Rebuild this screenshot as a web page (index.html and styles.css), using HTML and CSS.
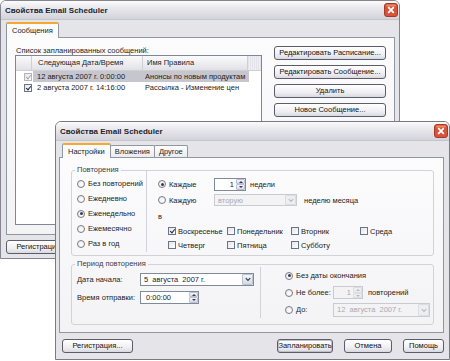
FILE: index.html
```html
<!DOCTYPE html>
<html lang="ru">
<head>
    <meta charset="UTF-8">
    <meta name="viewport" content="width=device-width, initial-scale=1.0">
    <title>Свойства Email Scheduler</title>
    <link rel="stylesheet" href="styles.css">
</head>
<body>
    <div class="desktop">

        <!-- back dialog: message list -->
        <section class="window back">
            <header class="titlebar">
                <span class="title">Свойства Email Scheduler</span>
                <svg class="close" viewBox="0 0 14 14"><rect x="0.5" y="0.5" width="13" height="13" rx="2.5" fill="#d8533a" stroke="#a63a26"/><rect x="2" y="1.5" width="10" height="2" rx="1" fill="#f5a070" opacity=".7"/><path d="M4.2 4.2L9.8 9.8M9.8 4.2L4.2 9.8" stroke="#fff" stroke-width="1.8"/></svg>
            </header>
            <div class="winbody">
                <nav class="tabs">
                    <span class="tab active">Сообщения</span>
                </nav>
                <div class="panel msgs">
                    <div class="msg-list">
                        <div class="caption">Список запланированных сообщений:</div>
                        <div class="listview">
                            <div class="lv-head">
                                <span class="hc hc-check"></span>
                                <span class="hc hc-date">Следующая Дата/Время</span>
                                <span class="hc hc-name">Имя Правила</span>
                                <span class="hc hc-fill"></span>
                            </div>
                            <div class="lv-row selected">
                                <span class="check on dim"></span>
                                <span class="cell cell-date">12 августа 2007 г. 0:00:00</span>
                                <span class="cell cell-name">Анонсы по новым продуктам</span>
                            </div>
                            <div class="lv-row">
                                <span class="check on"></span>
                                <span class="cell cell-date">2 августа 2007 г. 14:16:00</span>
                                <span class="cell cell-name">Рассылка - Изменение цен</span>
                            </div>
                        </div>
                    </div>
                    <div class="side-buttons">
                        <button class="btn">Редактировать Расписание...</button>
                        <button class="btn">Редактировать Сообщение...</button>
                        <button class="btn">Удалить</button>
                        <button class="btn">Новое Сообщение...</button>
                    </div>
                </div>
                <div class="footer">
                    <button class="btn btn-reg">Регистрация...</button>
                </div>
            </div>
        </section>

        <!-- front dialog: schedule settings -->
        <section class="window front">
            <header class="titlebar">
                <span class="title">Свойства Email Scheduler</span>
                <svg class="close" viewBox="0 0 14 14"><rect x="0.5" y="0.5" width="13" height="13" rx="2.5" fill="#d8533a" stroke="#a63a26"/><rect x="2" y="1.5" width="10" height="2" rx="1" fill="#f5a070" opacity=".7"/><path d="M4.2 4.2L9.8 9.8M9.8 4.2L4.2 9.8" stroke="#fff" stroke-width="1.8"/></svg>
            </header>
            <div class="winbody">
                <nav class="tabs">
                    <span class="tab active">Настройки</span>
                    <span class="tab">Вложения</span>
                    <span class="tab">Другое</span>
                </nav>
                <div class="panel settings">
                    <fieldset class="group repeat">
                        <legend>Повторения</legend>
                        <div class="freq">
                            <label class="opt"><span class="radio"></span>Без повторений</label>
                            <label class="opt"><span class="radio"></span>Ежедневно</label>
                            <label class="opt"><span class="radio on"></span>Еженедельно</label>
                            <label class="opt"><span class="radio"></span>Ежемесячно</label>
                            <label class="opt"><span class="radio"></span>Раз в год</label>
                        </div>
                        <div class="weekly">
                            <div class="wrow">
                                <label class="opt lead"><span class="radio on"></span>Каждые</label>
                                <span class="spin every">
                                    <span class="field-val">1</span>
                                    <span class="spin-btns"><i class="up"></i><i class="down"></i></span>
                                </span>
                                <span class="unit">недели</span>
                            </div>
                            <div class="wrow">
                                <label class="opt lead"><span class="radio"></span>Каждую</label>
                                <span class="combo disabled week-of">
                                    <span class="field-val">вторую</span>
                                    <span class="combo-btn"><svg viewBox="0 0 9 9"><path d="M2 3.5L4.5 6L7 3.5" fill="none" stroke="currentColor" stroke-width="1.4"/></svg></span>
                                </span>
                                <span class="unit month">неделю месяца</span>
                            </div>
                            <div class="wrow"><span class="in-word">в</span></div>
                            <div class="days">
                                <label class="opt"><span class="check on"></span>Воскресенье</label>
                                <label class="opt"><span class="check"></span>Понедельник</label>
                                <label class="opt"><span class="check"></span>Вторник</label>
                                <label class="opt"><span class="check"></span>Среда</label>
                                <label class="opt"><span class="check"></span>Четверг</label>
                                <label class="opt"><span class="check"></span>Пятница</label>
                                <label class="opt"><span class="check"></span>Субботу</label>
                            </div>
                        </div>
                    </fieldset>

                    <fieldset class="group period">
                        <legend>Период повторения</legend>
                        <div class="start">
                            <div class="prow">
                                <span class="plabel">Дата начала:</span>
                                <span class="combo start-date">
                                    <span class="field-val">5&nbsp; августа&nbsp; 2007 г.</span>
                                    <span class="combo-btn"><svg viewBox="0 0 9 9"><path d="M2 3.5L4.5 6L7 3.5" fill="none" stroke="currentColor" stroke-width="1.4"/></svg></span>
                                </span>
                            </div>
                            <div class="prow">
                                <span class="plabel">Время отправки:</span>
                                <span class="spin time">
                                    <span class="field-val">0:00:00</span>
                                    <span class="spin-btns"><i class="up"></i><i class="down"></i></span>
                                </span>
                            </div>
                        </div>
                        <div class="end">
                            <label class="opt"><span class="radio on"></span>Без даты окончания</label>
                            <div class="erow">
                                <label class="opt lead2"><span class="radio"></span>Не более:</label>
                                <span class="spin disabled count">
                                    <span class="field-val">1</span>
                                    <span class="spin-btns"><i class="up"></i><i class="down"></i></span>
                                </span>
                                <span class="unit">повторений</span>
                            </div>
                            <div class="erow">
                                <label class="opt lead2"><span class="radio"></span>До:</label>
                                <span class="combo disabled end-date">
                                    <span class="field-val">12&nbsp; августа&nbsp; 2007 г.</span>
                                    <span class="combo-btn"><svg viewBox="0 0 9 9"><path d="M2 3.5L4.5 6L7 3.5" fill="none" stroke="currentColor" stroke-width="1.4"/></svg></span>
                                </span>
                            </div>
                        </div>
                    </fieldset>
                </div>
                <div class="footer">
                    <button class="btn btn-reg">Регистрация...</button>
                    <span class="spacer"></span>
                    <button class="btn btn-default btn-plan">Запланировать</button>
                    <button class="btn btn-cancel">Отмена</button>
                    <button class="btn btn-help">Помощь</button>
                </div>
            </div>
        </section>
    </div>
</body>
</html>
```

FILE: styles.css
```css
* { box-sizing: border-box; }
body { margin: 0; background: #fff; font-family: "Liberation Sans", Arial, sans-serif; font-size: 7.5px; color: #1c1c22; }
.desktop { position: relative; width: 450px; height: 361px; overflow: hidden; }

/* windows */
.window { position: absolute; display: flex; flex-direction: column; background: #e4e4e9; border: 1px solid #85858f; border-radius: 6px 6px 0 0; }
.back { left: 0; top: 0; width: 400px; height: 259px; }
.front { left: 55px; top: 121px; width: 395px; height: 239px; border-color: #7a7a86; }
.titlebar { flex: none; height: 19px; display: flex; align-items: center; justify-content: space-between; padding: 0 1px 0 4px; background: linear-gradient(#fbfbfc, #e6e6eb 45%, #d3d3db); border-radius: 5px 5px 0 0; border-bottom: 1px solid #c4c4cc; }
.title { font-size: 8px; font-weight: bold; color: #23232c; }
.close { width: 14px; height: 14px; display: block; }
.winbody { flex: 1; display: flex; flex-direction: column; padding: 2px 4px 0 5px; }
.front .winbody { padding: 2px 5px 0 3px; }

/* tabs */
.tabs { display: flex; height: 15px; flex: none; }
.front .tabs { height: 14px; padding-left: 3px; }
.tab { height: 13px; margin-top: 2px; padding: 0 4px; line-height: 12px; border: 1px solid #8e98a2; border-bottom: none; border-radius: 2px 2px 0 0; background: linear-gradient(#fefefe, #e9e9ee); }
.tab + .tab { margin-left: -1px; }
.tab.active { position: relative; z-index: 1; height: 16px; margin-top: 0; padding: 0 5px; line-height: 13px; background: #fbfbfc; border-top: 2px solid #f2aa34; }
.front .tab.active { height: 15px; }
.panel { flex: none; border: 1px solid #8e98a2; background: linear-gradient(#fcfcfd, #f3f3f6); }

/* message list dialog */
.msgs { height: 198px; display: flex; gap: 12px; padding: 8px 8px 0 8px; }
.caption { height: 9px; line-height: 10px; padding-left: 1px; }
.listview { width: 247px; height: 170px; border: 1px solid #7f8794; background: #fff; }
.lv-head { display: flex; height: 15px; border-bottom: 1px solid #cfd0d6; background: linear-gradient(#fbfbfc, #ececf0 60%, #e0e0e6); line-height: 14px; }
.hc { border-right: 1px solid #cfcfd6; }
.hc-check { width: 16px; }
.hc-date { width: 111px; padding-left: 6px; }
.hc-name { width: 105px; padding-left: 4px; }
.hc-fill { flex: 1; border-right: none; background: repeating-linear-gradient(90deg, #e2e2e8 0 1px, #f0f0f4 1px 2px); }
.lv-row { display: flex; align-items: center; height: 11px; padding-left: 8px; }
.lv-row .check { margin-right: 1px; }
.cell { height: 11px; line-height: 11px; white-space: nowrap; }
.cell-date { width: 109px; padding-left: 4px; }
.cell-name { width: 107px; padding-left: 3px; }
.lv-row.selected .cell { background: #c6c6cf; }
.side-buttons { display: flex; flex-direction: column; gap: 5px; width: 112px; }

/* buttons */
.btn { height: 14px; padding: 0; border: 1px solid #5c5c6c; border-radius: 3px; background: linear-gradient(#ffffff, #eeeef2 65%, #d8d8e0); font: inherit; color: #111; line-height: 12px; }
.btn-default { box-shadow: inset 0 0 0 1px #c0c0cc; }
.footer { flex: none; display: flex; padding-top: 5px; }
.front .footer { padding: 6px 0 0 3px; gap: 11px; }
.btn-reg { width: 71px; }
.spacer { flex: 1; }
.btn-plan { width: 56px; }
.btn-cancel { width: 48px; }
.btn-help { width: 41px; }

/* settings dialog */
.settings { height: 176px; padding: 6px 9px 0 11px; }
.group { margin: 0; padding: 0 0 3px 0; border: 1px solid #d2d2da; border-radius: 3px; display: flex; }
.group legend { margin-left: 3px; padding: 0 2px; line-height: 12px; color: #3c3c4a; }
.freq { width: 75px; margin-top: -6px; padding: 6px 0 0 5px; border-right: 1px solid #d2d2da; }
.weekly { flex: 1; margin-top: -6px; padding: 6px 0 0 11px; }
.opt { display: flex; align-items: center; gap: 3px; height: 15px; white-space: nowrap; }
.wrow { display: flex; align-items: center; height: 16px; }
.lead { width: 56px; }
.unit { margin-left: 4px; }
.unit.month { margin-left: 7px; }
.days { display: grid; grid-template-columns: 59px 64px 69px auto; padding-left: 10px; }
.days .opt { height: 14px; gap: 2px; }

.period { margin-top: 2px; padding-bottom: 6px; }
.start { width: 188px; padding-left: 5px; }
.prow { display: flex; align-items: center; height: 18px; }
.plabel { width: 63px; }
.end { flex: 1; margin-top: -3px; padding-left: 24px; border-left: 1px solid #d2d2da; }
.end .opt { height: 17px; }
.erow { display: flex; align-items: center; height: 17px; }
.lead2 { width: 48px; }
.erow .unit { margin-left: 5px; }

/* radio and check marks */
.radio { flex: none; position: relative; width: 8px; height: 8px; border: 1px solid #7a7a88; border-radius: 50%; background: radial-gradient(circle at 60% 65%, #fff, #e6e6ec); }
.radio.on::after { content: ""; position: absolute; left: 1.5px; top: 1.5px; width: 3px; height: 3px; border-radius: 50%; background: #3a3a48; }
.check { flex: none; position: relative; width: 8px; height: 8px; border: 1px solid #6a7488; background: linear-gradient(135deg, #e4e4ea, #fff); }
.check.on::after { content: ""; position: absolute; left: 2px; top: 0; width: 2px; height: 4px; border: solid #22283a; border-width: 0 1.5px 1.5px 0; transform: rotate(40deg); }
.check.dim { border-color: #b4b4bd; }
.check.dim::after { border-color: #a2a2ac; }

/* edit fields */
.spin, .combo { display: flex; align-items: stretch; height: 13px; border: 1px solid #7f8a9c; background: #fff; }
.field-val { flex: 1; line-height: 11px; padding: 0 3px; white-space: nowrap; }
.spin.every { width: 32px; }
.spin.every .field-val { text-align: right; padding-right: 2px; }
.spin.time { width: 59px; }
.spin.time .field-val { padding-left: 5px; }
.spin.count { width: 30px; }
.spin.count .field-val { text-align: right; padding-right: 2px; }
.spin-btns { width: 9px; display: flex; flex-direction: column; }
.spin-btns i { flex: 1; position: relative; border: 1px solid #b9c1d2; border-radius: 1px; background: linear-gradient(#f6f6fa, #d8dbe6); }
.spin-btns i::after { content: ""; position: absolute; left: 2px; border-left: 2px solid transparent; border-right: 2px solid transparent; }
.spin-btns .up::after { top: 1px; border-bottom: 2px solid #3a3a48; }
.spin-btns .down::after { top: 1px; border-top: 2px solid #3a3a48; }
.combo.start-date { width: 114px; }
.combo.week-of { width: 83px; height: 12px; }
.combo.end-date { width: 97px; height: 14px; }
.combo-btn { width: 11px; display: flex; align-items: center; justify-content: center; color: #3a3a50; border: 1px solid #b9c1d2; border-radius: 1px; background: linear-gradient(#f6f6fa, #d6d9e4); }
.combo-btn svg { width: 8px; height: 8px; }
.disabled { border-color: #c9cbd2; background: #f3f3f5; color: #a9a9b2; }
.disabled .combo-btn, .disabled .spin-btns i { border-color: #dcdde3; background: #eeeef2; color: #b8b8c0; }
.disabled .spin-btns .up::after { border-bottom-color: #b8b8c0; }
.disabled .spin-btns .down::after { border-top-color: #b8b8c0; }
```
